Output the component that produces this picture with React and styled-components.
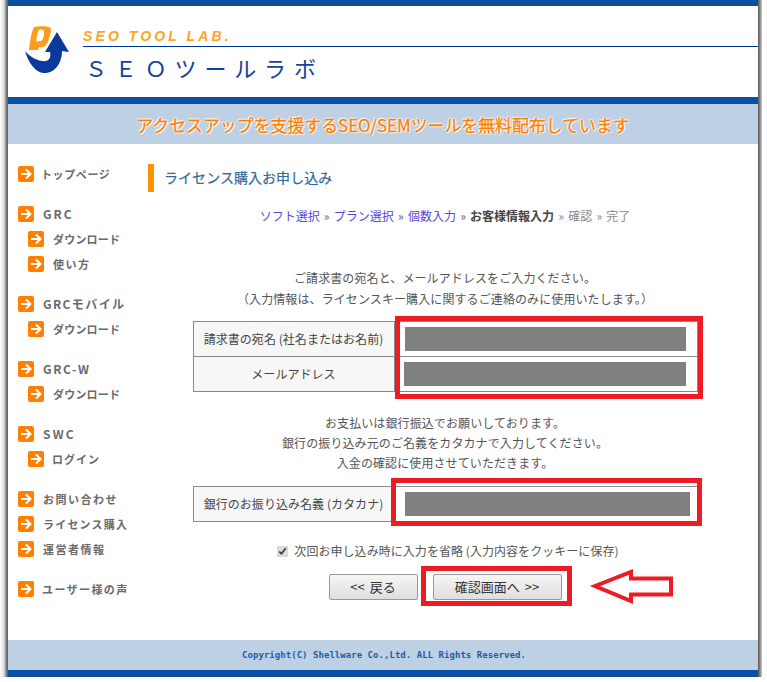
import React from "react";
import styled, { createGlobalStyle } from "styled-components";

const Global = createGlobalStyle`
  html, body { margin: 0; padding: 0; background: #fff; }
  body { font-family: "Noto Sans CJK JP", "Liberation Sans", sans-serif; color: #444; font-size: 12px; }
`;

const Frame = styled.div`
  width: 750px;
  padding: 0 4px 0 8px;
  background:
    linear-gradient(to right, #fff 0, #ddd 4px, #888 6px, #555 8px) left top / 8px 100% no-repeat,
    linear-gradient(to right, #555 0, #888 2px, #ccc 4px) right top / 4px 100% no-repeat;
`;
const TopBar = styled.div`height: 6px; background: #0a50a0;`;
const Header = styled.header`
  height: 91px;
  display: flex;
  align-items: flex-start;
  background: #fff;
`;
const Logo = styled.svg`
  flex: none;
  width: 48px;
  height: 50px;
  margin: 20px 0 0 16px;
`;
const Brand = styled.div`
  flex: 1;
  margin: 20px 0 0 11px;
`;
const BrandEn = styled.div`
  font: italic 700 14px/20px "Liberation Sans", sans-serif;
  letter-spacing: 3.1px;
  color: #ffa31f;
  height: 20px;
  border-bottom: 1px solid #003399;
`;
const BrandJa = styled.div`
  margin: 5px 0 0 2px;
  font: 400 22px/30px "Noto Sans CJK JP", sans-serif;
  letter-spacing: 7.85px;
  color: #15429f;
  white-space: nowrap;
`;
const Band = styled.div`
  border-top: 7px solid #0a50a0;
  height: 40px;
  background: #bdd0e4;
  display: flex;
  align-items: center;
  justify-content: center;
  font-size: 16.9px;
  font-weight: 400;
  color: #ff7f00;
  -webkit-text-stroke: 0.3px #ff7f00;
  text-shadow: 0 0 2px #fff, 0 0 2px #fff, 0 0 2px #fff, 1px 1px 1px #fff, -1px -1px 1px #fff;
`;
const Main = styled.div`
  display: flex;
  height: 496px;
  background: #fff;
`;
const Sidebar = styled.nav`
  flex: none;
  width: 140px;
  box-sizing: border-box;
  padding: 22px 0 0 10px;
  display: flex;
  flex-direction: column;
  gap: 24px;
`;
const Group = styled.div`
  display: flex;
  flex-direction: column;
  gap: 9px;
`;
const Item = styled.a`
  display: flex;
  align-items: center;
  height: 16px;
  margin-left: ${p => (p.$sub ? 10 : 0)}px;
  font-size: ${p => (p.$latin ? 12 : 11)}px;
  font-weight: 700;
  line-height: 16px;
  color: #6a6a6a;
  white-space: nowrap;
  letter-spacing: ${p => p.$track}px;
`;
const ItemLabel = styled.span`margin-left: ${p => p.$gap}px;`;
const Content = styled.main`
  flex: 1;
  box-sizing: border-box;
  padding: 20px 16px 0 0;
  display: flex;
  flex-direction: column;
  align-items: center;
`;
const Title = styled.h1`
  align-self: stretch;
  margin: 0;
  height: 28px;
  border-left: 6px solid #ff9000;
  padding-left: 10px;
  font-size: 14px;
  font-weight: 400;
  letter-spacing: 0.05px;
  line-height: 26px;
  color: #33689f;
  -webkit-text-stroke: 0.2px #33689f;
`;
const Crumbs = styled.div`
  margin-top: 14px;
  line-height: 20px;
  color: #666;
  white-space: nowrap;
  word-spacing: 1.5px;
`;
const StepLink = styled.span`color: #5a48d8;`;
const StepNow = styled.b`color: #444; font-weight: 700;`;
const StepTodo = styled.span`color: #888;`;
const Para = styled.p`
  margin: ${p => p.$top}px 0 0;
  text-align: center;
  line-height: ${p => p.$lh}px;
  color: #555;
  letter-spacing: 0.1px;
`;
const FormWrap = styled.div`
  position: relative;
  margin-top: ${p => p.$top}px;
  width: 505px;
`;
const Table = styled.table`
  width: 100%;
  border-collapse: collapse;
  table-layout: fixed;
`;
const Label = styled.th`
  width: 201px;
  height: 35px;
  box-sizing: border-box;
  padding: 0 0 2px;
  border: 1px solid #888;
  background: #f7f7f7;
  font-weight: 400;
  font-size: 12px;
  letter-spacing: 0.05px;
  color: #444;
  text-align: center;
`;
const Cell = styled.td`
  border: 1px solid #888;
  padding: 0 0 0 ${p => p.$pad}px;
`;
const Redacted = styled.div`
  height: 24px;
  width: ${p => p.$w}px;
  background: #808080;
`;
const RedBox = styled.div`
  position: absolute;
  left: ${p => p.$l}px;
  top: ${p => p.$t}px;
  width: ${p => p.$w}px;
  height: ${p => p.$h}px;
  box-sizing: border-box;
  border: 5px solid #ed1c24;
  pointer-events: none;
`;
const SaveRow = styled.label`
  margin-top: 19px;
  height: 20px;
  display: flex;
  align-items: center;
  color: #555;
  line-height: 20px;
  letter-spacing: 0.05px;
  padding-left: 6px;
`;
const Check = styled.input`
  margin: 0 6px 0 0;
  width: 11px;
  height: 11px;
  accent-color: #dcdcdc;
`;
const Buttons = styled.div`
  position: relative;
  margin-top: 13px;
  display: flex;
  gap: 15px;
`;
const Button = styled.button`
  position: relative;
  width: ${p => p.$w}px;
  height: 26px;
  padding: 0;
  border: 1px solid #999;
  border-radius: 2px;
  background: linear-gradient(#f6f6f6, #dedede);
  font: 400 13px/22px "Noto Sans CJK JP", sans-serif;
  word-spacing: 2px;
  color: #333;
`;
const ConfirmBox = styled.span`
  position: absolute;
  left: -13px;
  top: -9px;
  right: -11px;
  bottom: -7px;
  border: 5px solid #ed1c24;
`;
const Pointer = styled.svg`
  position: absolute;
  left: 260px;
  top: -8px;
  width: 88px;
  height: 42px;
`;
const Footer = styled.footer`
  height: 30px;
  border-bottom: 7px solid #0a50a0;
  background: #bdd0e4;
  display: flex;
  align-items: center;
  justify-content: center;
  font: 700 9px/30px "DejaVu Sans Mono", monospace;
  letter-spacing: 0.04px;
  color: #1a5cb0;
  white-space: pre;
  padding-left: 2px;
`;

const ArrowBadge = () => (
  <svg width="16" height="16" viewBox="0 0 16 16" style={{ flex: "none" }}>
    <rect width="16" height="16" rx="2" fill="#ff7f00" />
    <path d="M3 8h9M8 3.5l4.5 4.5L8 12.5" fill="none" stroke="#fff" strokeWidth="2" />
  </svg>
);

const nav = [
  [{ t: "トップページ", track: 0.6, gap: 7 }],
  [
    { t: "GRC", track: 2, gap: 9, latin: true },
    { t: "ダウンロード", track: 0.2, gap: 9, sub: true },
    { t: "使い方", track: 1.5, gap: 9, sub: true },
  ],
  [
    { t: "GRCモバイル", track: 1.4, gap: 9, latin: true },
    { t: "ダウンロード", track: 0.2, gap: 9, sub: true },
  ],
  [
    { t: "GRC-W", track: 1.6, gap: 9, latin: true },
    { t: "ダウンロード", track: 0.2, gap: 9, sub: true },
  ],
  [
    { t: "SWC", track: 2.2, gap: 9, latin: true },
    { t: "ログイン", track: 1, gap: 8, sub: true },
  ],
  [
    { t: "お問い合わせ", track: 1.5, gap: 9 },
    { t: "ライセンス購入", track: 1.2, gap: 9 },
    { t: "運営者情報", track: 1.5, gap: 9 },
  ],
  [{ t: "ユーザー様の声", track: 1.4, gap: 8 }],
];

export default function App() {
  return (
    <>
      <Global />
      <Frame>
        <TopBar />
        <Header>
          <Logo viewBox="24 26 48 50">
            <path
              fillRule="evenodd"
              fill="#ff9c1a"
              d="M34 27 C38 26 46 26 49 27 C52 28 51 32 50 35 C49 40 47 46 43 47 L39 47 L38 50 L29 50 C30 42 31 33 34 27 Z M38 31 C40 29 44 29 44 32 C44 36 43 40 41 41 L36 41.5 Z"
            />
            <path
              fill="#0a3a9c"
              d="M57 32 L69 52 L62 51 C62 63 55 74 43 73 C35 72 28 62 25 51 C31 58 40 62 46 61 C50 60 51 56 50 52 L45 52 Z"
            />
          </Logo>
          <Brand>
            <BrandEn>SEO TOOL LAB.</BrandEn>
            <BrandJa>ＳＥＯツールラボ</BrandJa>
          </Brand>
        </Header>
        <Band>アクセスアップを支援するSEO/SEMツールを無料配布しています</Band>
        <Main>
          <Sidebar>
            {nav.map((group, i) => (
              <Group key={i}>
                {group.map((it, j) => (
                  <Item key={j} $sub={it.sub} $latin={it.latin} $track={it.track}>
                    <ArrowBadge />
                    <ItemLabel $gap={it.gap}>{it.t}</ItemLabel>
                  </Item>
                ))}
              </Group>
            ))}
          </Sidebar>
          <Content>
            <Title>ライセンス購入お申し込み</Title>
            <Crumbs>
              <StepLink>ソフト選択</StepLink> » <StepLink>プラン選択</StepLink> » <StepLink>個数入力</StepLink> »{" "}
              <StepNow>お客様情報入力</StepNow> <StepTodo>» 確認 » 完了</StepTodo>
            </Crumbs>
            <Para $top={41} $lh={21}>
              ご請求書の宛名と、メールアドレスをご入力ください。
              <br />
              （入力情報は、ライセンスキー購入に関するご連絡のみに使用いたします。）
            </Para>
            <FormWrap $top={12}>
              <Table>
                <tbody>
                  <tr>
                    <Label>請求書の宛名 (社名またはお名前)</Label>
                    <Cell $pad={10}><Redacted $w={281} /></Cell>
                  </tr>
                  <tr>
                    <Label>メールアドレス</Label>
                    <Cell $pad={9}><Redacted $w={282} /></Cell>
                  </tr>
                </tbody>
              </Table>
              <RedBox $l={202} $t={-5} $w={308} $h={83} />
            </FormWrap>
            <Para $top={21} $lh={20}>
              お支払いは銀行振込でお願いしております。
              <br />
              銀行の振り込み元のご名義をカタカナで入力してください。
              <br />
              入金の確認に使用させていただきます。
            </Para>
            <FormWrap $top={13}>
              <Table>
                <tbody>
                  <tr>
                    <Label>銀行のお振り込み名義 (カタカナ)</Label>
                    <Cell $pad={10}><Redacted $w={285} /></Cell>
                  </tr>
                </tbody>
              </Table>
              <RedBox $l={198} $t={-8} $w={311} $h={48} />
            </FormWrap>
            <SaveRow>
              <Check type="checkbox" defaultChecked />
              次回お申し込み時に入力を省略 (入力内容をクッキーに保存)
            </SaveRow>
            <Buttons>
              <Button $w={89} type="button">&lt;&lt; 戻る</Button>
              <Button $w={129} type="button">
                確認画面へ &gt;&gt;
                <ConfirmBox />
              </Button>
              <Pointer viewBox="589 566 88 42">
                <path
                  d="M595 586 L631 572 L631 578.5 L671 578.5 L671 594.5 L631 594.5 L631 601 Z"
                  fill="#fff"
                  stroke="#ed1c24"
                  strokeWidth="4"
                />
              </Pointer>
            </Buttons>
          </Content>
        </Main>
        <Footer>Copyright(C) Shellware Co.,Ltd. ALL Rights Reserved.</Footer>
      </Frame>
    </>
  );
}
